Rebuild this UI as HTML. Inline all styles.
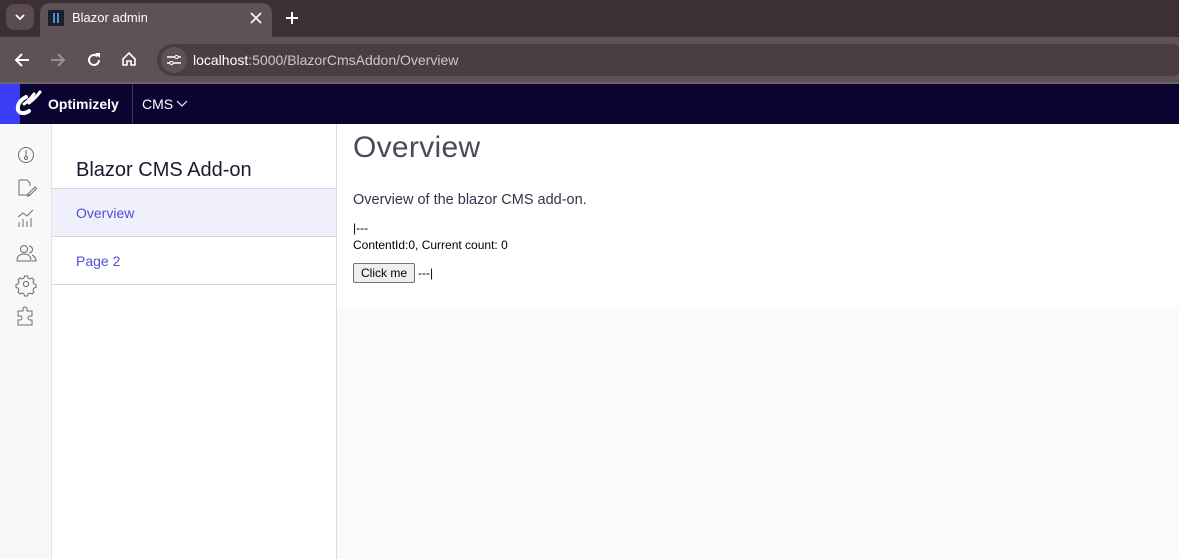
<!DOCTYPE html>
<html><head><meta charset="utf-8"><style>
*{box-sizing:border-box;margin:0;padding:0}
body{width:1179px;height:559px;overflow:hidden;font-family:"Liberation Sans",sans-serif;background:#fff;position:relative}
.abs{position:absolute}
</style></head><body>
<div class="abs" style="left:0;top:0;width:1179px;height:37px;background:#3c3035"></div>
<div class="abs" style="left:6px;top:4px;width:28px;height:26px;border-radius:8px;background:#5a4c52"></div>
<svg class="abs" style="left:14px;top:12px" width="12" height="10"><path d="M2 3l4 4 4-4" stroke="#fff" stroke-width="1.8" fill="none"/></svg>
<div class="abs" style="left:40px;top:3px;width:232px;height:34px;border-radius:10px 10px 0 0;background:#5e5157"></div>
<div class="abs" style="left:48px;top:10px;width:16px;height:16px;background:#1b1f2a"></div>
<div class="abs" style="left:53px;top:13px;width:2px;height:10px;background:#4f8fd6"></div>
<div class="abs" style="left:57px;top:13px;width:2px;height:10px;background:#4f8fd6"></div>
<div class="abs" style="left:72px;top:10px;color:#fff;font-size:13px">Blazor admin</div>
<svg class="abs" style="left:250px;top:12px" width="12" height="12"><path d="M1 1l10 10M11 1L1 11" stroke="#fff" stroke-width="1.6"/></svg>
<svg class="abs" style="left:285px;top:11px" width="14" height="14"><path d="M7 1v12M1 7h12" stroke="#fff" stroke-width="2"/></svg>
<div class="abs" style="left:0;top:37px;width:1179px;height:46px;background:#5e5157"></div>
<div class="abs" style="left:0;top:82px;width:1179px;height:2px;background:#6e6167"></div>
<svg class="abs" style="left:14px;top:52px" width="16" height="16"><path d="M15 8H2M8 2L2 8l6 6" stroke="#fff" stroke-width="2" fill="none"/></svg>
<svg class="abs" style="left:50px;top:52px" width="16" height="16"><path d="M1 8h13M8 2l6 6-6 6" stroke="#9a8d93" stroke-width="2" fill="none"/></svg>
<svg class="abs" style="left:86px;top:52px" width="16" height="16"><path d="M13 8a5 5 0 11-1.5-3.6" stroke="#fff" stroke-width="2" fill="none"/><path d="M9 1h5v5z" fill="#fff"/></svg>
<svg class="abs" style="left:121px;top:51px" width="16" height="16"><path d="M2 8L8 2l6 6v6h-4v-4H6v4H2z" stroke="#fff" stroke-width="1.6" fill="none"/></svg>
<div class="abs" style="left:157px;top:44px;width:1030px;height:32px;border-radius:16px;background:#4a3e44"></div>
<div class="abs" style="left:161px;top:47px;width:26px;height:26px;border-radius:13px;background:#5e5157"></div>
<svg class="abs" style="left:166px;top:53px" width="16" height="14"><path d="M1 4h8M12 4h3M1 10h3M7 10h8" stroke="#fff" stroke-width="1.6"/><circle cx="10.5" cy="4" r="1.6" stroke="#fff" fill="none"/><circle cx="5.5" cy="10" r="1.6" stroke="#fff" fill="none"/></svg>
<div class="abs" style="left:193px;top:52px;font-size:14px;color:#fff">localhost<span style="color:#cfc5ca">:5000/BlazorCmsAddon/Overview</span></div>
<div class="abs" style="left:0;top:84px;width:1179px;height:40px;background:#0b0433"></div>
<div class="abs" style="left:0;top:84px;width:20px;height:40px;background:#3b3cf6"></div>
<svg class="abs" style="left:8px;top:88px" width="34" height="32"><path d="M18 9c-6 3-9 8-8 13 2 4 7 4 11 1" stroke="#fff" stroke-width="4" fill="none" stroke-linecap="round"/><path d="M26 6c-3 4-7 8-10 10M32 4c-3 4-7 8-11 11" stroke="#fff" stroke-width="3" fill="none" stroke-linecap="round"/></svg>
<div class="abs" style="left:48px;top:96px;color:#fff;font-weight:bold;font-size:14px">Optimizely</div>
<div class="abs" style="left:132px;top:84px;width:1px;height:40px;background:#3a3560"></div>
<div class="abs" style="left:142px;top:96px;color:#fff;font-size:14px">CMS</div>
<svg class="abs" style="left:176px;top:100px" width="12" height="8"><path d="M1 1l5 5 5-5" stroke="#fff" stroke-width="1.1" fill="none"/></svg>
<div class="abs" style="left:0;top:124px;width:52px;height:435px;background:#f8f8f9;border-right:1px solid #e2e2e4"></div>
<svg class="abs" style="left:15px;top:145px" width="24" height="190" fill="none" stroke="#6b6b75" stroke-width="1">
<circle cx="11" cy="10" r="7.5"/><path d="M11 5v6"/><circle cx="11" cy="13" r="1.5"/>
<path d="M4 35h8l3 3v3M4 35v15h11M13 49l7-7 1.5 1.5-7 7-2 .5z"/>
<path d="M4 82v-5M8 82v-8M12 82v-6M16 82v-9M3 72l5-4 4 3 6-6"/>
<circle cx="9" cy="104" r="3.5"/><path d="M2 116c0-5 3-7 7-7s7 2 7 7zM14 101a3.5 3.5 0 110 7M17 110c2 1 4 3 4 6h-4"/>
<circle cx="11" cy="139" r="2.6"/><path d="M9.5 131h3l.5 2 2 1 2-1 2 2-1 2 1 2 2 .5v3l-2 .5-1 2 1 2-2 2-2-1-2 1-.5 2h-3l-.5-2-2-1-2 1-2-2 1-2-1-2-2-.5v-3l2-.5 1-2-1-2 2-2 2 1 2-1z"/>
<path d="M3 166h5v-2a2 2 0 114 0v2h5v5h-2a2 2 0 100 4h2v5H3v-5h2a2 2 0 100-4H3z"/>
</svg>
<div class="abs" style="left:52px;top:124px;width:285px;height:435px;background:#fff;border-right:1px solid #dcdcdf"></div>
<div class="abs" style="left:76px;top:159px;font-size:20px;color:#1a1a2e">Blazor CMS Add-on</div>
<div class="abs" style="left:52px;top:188px;width:284px;height:49px;background:#f0f0fd;border-top:1px solid #d6d6dc;border-bottom:1px solid #d6d6dc"></div>
<div class="abs" style="left:76px;top:205px;font-size:14px;color:#4f4fd8">Overview</div>
<div class="abs" style="left:76px;top:253px;font-size:14px;color:#4f4fd8">Page 2</div>
<div class="abs" style="left:52px;top:284px;width:284px;height:1px;background:#d6d6dc"></div>
<div class="abs" style="left:337px;top:307px;width:842px;height:252px;background:#fafafa"></div>
<div class="abs" style="left:353px;top:131px;font-size:30px;color:#4a4a5c;letter-spacing:0.3px">Overview</div>
<div class="abs" style="left:353px;top:192px;font-size:14.5px;color:#33334a">Overview of the blazor CMS add-on.</div>
<div class="abs" style="left:353px;top:221px;font-size:12px;color:#000">|---</div>
<div class="abs" style="left:353px;top:238px;font-size:12px;color:#000">ContentId:0, Current count: 0</div>
<div class="abs" style="left:353px;top:263px;width:62px;height:20px;border:1px solid #767676;border-radius:2px;background:#efefef;font-size:12px;text-align:center;line-height:18px">Click me</div>
<div class="abs" style="left:418px;top:266px;font-size:12px;color:#000">---|</div>
</body></html>
